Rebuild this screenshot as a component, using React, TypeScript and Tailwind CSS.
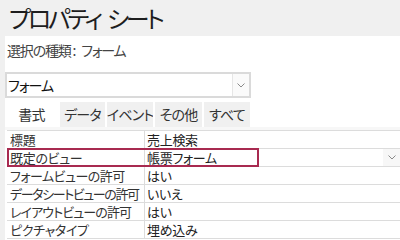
import React from 'react';

const rows = [
  { label: '標題', value: '売上検索', tr: 'tracking-[-0.3px]' },
  { label: '既定のビュー', value: '帳票フォーム', tr: 'tracking-[-0.3px]', selected: true },
  { label: 'フォームビューの許可', value: 'はい', tr: 'tracking-[-0.5px]' },
  { label: 'データシートビューの許可', value: 'いいえ', tr: 'tracking-[-1.4px]' },
  { label: 'レイアウトビューの許可', value: 'はい', tr: 'tracking-[-0.9px]' },
  { label: 'ピクチャタイプ', value: '埋め込み', tr: 'tracking-[-0.3px]' },
];

const tabs = [
  { name: '書式', w: 'w-[53px]' },
  { name: 'データ', w: 'w-[47px]' },
  { name: 'イベント', w: 'w-[48px]' },
  { name: 'その他', w: 'w-[49px]' },
  { name: 'すべて', w: 'w-[48px]' },
];

const Chevron = () => (
  <svg width="8" height="5" viewBox="0 0 8 5" fill="none">
    <polyline points="0.5,0.5 4,4 7.5,0.5" stroke="#8a8a8a" strokeWidth="1" />
  </svg>
);

const App: React.FC = () => {
  return (
    <div className="w-[400px] h-[240px] overflow-hidden bg-[#f0f0f0] flex flex-col font-['Noto_Sans_CJK_JP',sans-serif] [font-feature-settings:'palt'] text-[#222]">
      {/* header */}
      <div className="h-[36px] shrink-0 pl-[9px] flex items-center text-[24px] tracking-[-3.2px] leading-none text-[#1e1e1e] whitespace-nowrap">
        <span>プロパティ</span>
        <span className="ml-[7px]">シート</span>
      </div>

      <div className="flex-1 ml-[5px] bg-white flex flex-col">
        <div className="h-[28px] pt-[6px] pl-[2px] flex text-[14px] tracking-[-1.2px] leading-[16px] text-[#444] whitespace-nowrap">
          <span>選択の種類</span>
          <span className="ml-[2px]">:</span>
          <span className="ml-[6px]">フォーム</span>
        </div>

        {/* combo */}
        <div className="mt-[8px] w-[246px] h-[26px] border-2 border-[#dadada] flex">
          <div className="flex-1 pl-[1px] flex items-center text-[14px] tracking-[-1px] text-[#111]">フォーム</div>
          <div className="w-[17px] border-l border-[#e6e6e6] bg-[#fafafa] flex items-center justify-center">
            <Chevron />
          </div>
        </div>

        {/* tabs */}
        <div className="mt-[4px] w-[246px] h-[25px] flex text-[14px] tracking-[-0.8px] whitespace-nowrap">
          {tabs.map((t, i) => (
            <div
              key={t.name}
              className={
                i === 0
                  ? `${t.w} bg-white flex items-center justify-center text-[#333]`
                  : `${t.w} bg-[#f0f0f0] border-l-2 border-white flex items-center justify-center text-[#333]`
              }
            >
              {t.name}
            </div>
          ))}
        </div>
        <div className="h-[3px] bg-[#f7f7f7]" />

        {/* property grid */}
        <div className="ml-[2px] border-t border-[#dcdcdc] text-[13px] whitespace-nowrap">
          {rows.map((r) => (
            <div key={r.label} className="relative h-[18px] flex border-b border-[#dcdcdc]">
              <div className={`w-[138px] shrink-0 pl-[3px] border-r border-[#dcdcdc] flex items-center leading-none text-[#333] overflow-hidden ${r.tr}`}>
                {r.label}
              </div>
              {r.selected ? (
                <div className="flex-1 flex tracking-[-0.3px]">
                  <div className="w-[112px] pl-[2px] flex items-center leading-none text-[#222]">{r.value}</div>
                  <div className="flex-1 flex justify-end">
                    <div className="w-[17px] bg-[#f7f7f7] flex items-center justify-center">
                      <Chevron />
                    </div>
                  </div>
                  <div className="absolute left-0 top-[-1px] w-[252px] h-[19px] border-2 border-[#a82a50]" />
                </div>
              ) : (
                <div className="flex-1 pl-[2px] flex items-center leading-none text-[#222] tracking-[-0.3px]">{r.value}</div>
              )}
            </div>
          ))}
        </div>
      </div>
    </div>
  );
};

export default App;
